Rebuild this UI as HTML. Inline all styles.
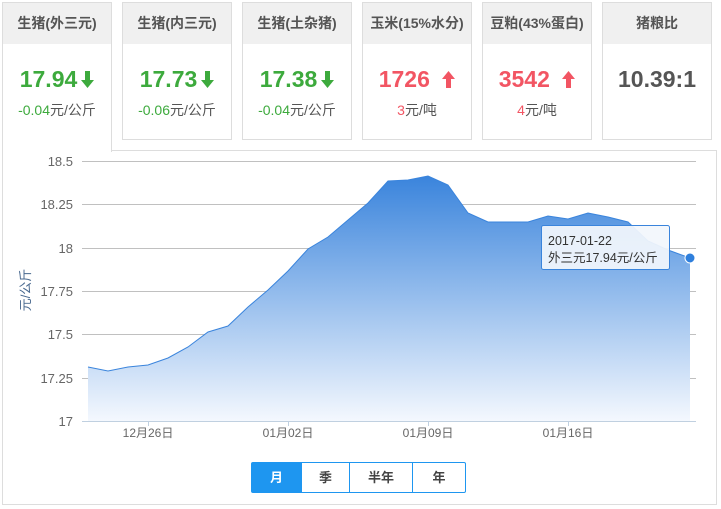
<!DOCTYPE html>
<html><head><meta charset="utf-8"><style>
*{margin:0;padding:0;box-sizing:border-box}
body{width:721px;height:509px;background:#fff;font-family:"Liberation Sans","Noto Sans CJK SC",sans-serif;position:relative;overflow:hidden}
.card{position:absolute;top:2px;width:110px;height:138px;border:1px solid #ddd;background:#fff;text-align:center}
.card .h{height:41px;background:#f0f0f0;line-height:41px;font-size:14px;font-weight:bold;color:#555}
.card .v{margin-top:22px;font-size:23px;font-weight:bold;line-height:26px}
.card .v svg{vertical-align:-1px;margin-left:4px}
.card .s{margin-top:8px;font-size:14px;color:#555}
.g{color:#3daa3d}.r{color:#f25563}
.panel{position:absolute;left:2px;top:150px;width:715px;height:355px;border:1px solid #ddd;background:#fff}
.btns{position:absolute;left:251px;top:462px;height:31px;display:flex;border:1px solid #1e96f0;border-radius:2px;background:#fff}
.btns div{height:29px;line-height:29px;text-align:center;font-size:13px;font-weight:bold;color:#444;border-left:1px solid #1e96f0}
.btns div:first-child{border-left:none;background:#1e96f0;color:#fff}
</style></head><body>
<div class="panel"></div>
<div class="card" style="left:2px;height:150px;border-bottom:none;z-index:2"><div class="h">生猪(外三元)</div><div class="v g">17.94<svg width="13" height="17" viewBox="0 0 13 17"><path d="M4,0h5v9h4l-6.5,8l-6.5,-8h4z" fill="#3daa3d"/></svg></div><div class="s"><span class="g">-0.04</span>元/公斤</div></div>
<div class="card" style="left:122px"><div class="h">生猪(内三元)</div><div class="v g">17.73<svg width="13" height="17" viewBox="0 0 13 17"><path d="M4,0h5v9h4l-6.5,8l-6.5,-8h4z" fill="#3daa3d"/></svg></div><div class="s"><span class="g">-0.06</span>元/公斤</div></div>
<div class="card" style="left:242px"><div class="h">生猪(土杂猪)</div><div class="v g">17.38<svg width="13" height="17" viewBox="0 0 13 17"><path d="M4,0h5v9h4l-6.5,8l-6.5,-8h4z" fill="#3daa3d"/></svg></div><div class="s"><span class="g">-0.04</span>元/公斤</div></div>
<div class="card" style="left:362px"><div class="h">玉米(15%水分)</div><div class="v r">1726 <svg width="13" height="17" viewBox="0 0 13 17" style="margin-left:6px"><path d="M4,17h5v-9h4l-6.5,-8l-6.5,8h4z" fill="#f25563"/></svg></div><div class="s"><span class="r">3</span>元/吨</div></div>
<div class="card" style="left:482px"><div class="h">豆粕(43%蛋白)</div><div class="v r">3542 <svg width="13" height="17" viewBox="0 0 13 17" style="margin-left:6px"><path d="M4,17h5v-9h4l-6.5,-8l-6.5,8h4z" fill="#f25563"/></svg></div><div class="s"><span class="r">4</span>元/吨</div></div>
<div class="card" style="left:602px"><div class="h">猪粮比</div><div class="v" style="color:#555">10.39:1</div></div>
<svg style="position:absolute;left:0;top:0" width="721" height="509">
<defs><linearGradient id="gr" x1="0" y1="0" x2="0" y2="1"><stop offset="0" stop-color="#3a84dc"/><stop offset="1" stop-color="#f4f8fe"/></linearGradient></defs>
<g stroke="#c0c0c0" stroke-width="1">
<line x1="82" y1="161.5" x2="696" y2="161.5"/><line x1="82" y1="204.5" x2="696" y2="204.5"/><line x1="82" y1="248.5" x2="696" y2="248.5"/><line x1="82" y1="291.5" x2="696" y2="291.5"/><line x1="82" y1="334.5" x2="696" y2="334.5"/><line x1="82" y1="378.5" x2="696" y2="378.5"/></g>
<path d="M88,421 L88,367 L108,371 L128,367 L148,365 L168,358 L188,347 L208,332 L228,326 L248,307 L268,290 L288,271 L308,249 L328,237 L348,220 L368,203 L388,181 L408,180 L428,176 L448,185 L468,213 L488,222 L508,222 L528,222 L548,216 L568,219 L588,213 L608,217 L628,222 L648,241 L668,250 L690,258 L690,421 Z" fill="url(#gr)"/>
<path d="M88,367 L108,371 L128,367 L148,365 L168,358 L188,347 L208,332 L228,326 L248,307 L268,290 L288,271 L308,249 L328,237 L348,220 L368,203 L388,181 L408,180 L428,176 L448,185 L468,213 L488,222 L508,222 L528,222 L548,216 L568,219 L588,213 L608,217 L628,222 L648,241 L668,250 L690,258" fill="none" stroke="#3a84dc" stroke-width="1"/>
<line x1="82" y1="421.5" x2="696" y2="421.5" stroke="#c0d0e0"/>
<g stroke="#c0d0e0"><line x1="148.5" y1="421" x2="148.5" y2="426"/><line x1="288.5" y1="421" x2="288.5" y2="426"/><line x1="428.5" y1="421" x2="428.5" y2="426"/><line x1="568.5" y1="421" x2="568.5" y2="426"/></g>
<g font-size="13" fill="#666" text-anchor="end" font-family="Liberation Sans,sans-serif">
<text x="73" y="166">18.5</text><text x="73" y="209">18.25</text><text x="73" y="253">18</text><text x="73" y="296">17.75</text><text x="73" y="339">17.5</text><text x="73" y="383">17.25</text><text x="73" y="426">17</text></g>
<g font-size="12" fill="#666" text-anchor="middle"><text x="148" y="437">12月26日</text><text x="288" y="437">01月02日</text><text x="428" y="437">01月09日</text><text x="568" y="437">01月16日</text></g>
<text transform="translate(30,290) rotate(-90)" font-size="13" fill="#4a6a90" text-anchor="middle">元/公斤</text>
<rect x="541.5" y="225.5" width="128" height="44" rx="2" fill="#f2f6fc" fill-opacity="0.93" stroke="#3a84dc"/>
<text x="548" y="245" font-size="12.5" fill="#333">2017-01-22</text>
<text x="548" y="262" font-size="12.5" fill="#333">外三元17.94元/公斤</text>
<circle cx="690" cy="258" r="5" fill="#2f7fdc" stroke="#fff" stroke-width="1"/>
</svg>
<div class="btns"><div style="width:49px">月</div><div style="width:48px">季</div><div style="width:63px">半年</div><div style="width:53px">年</div></div>
</body></html>
